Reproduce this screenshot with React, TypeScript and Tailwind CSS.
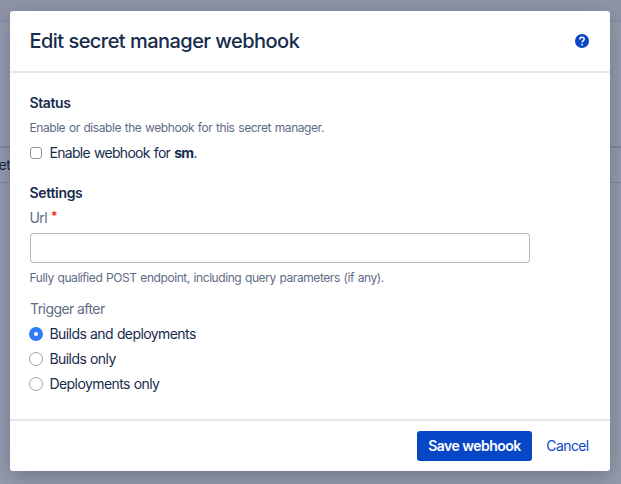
import React from "react";

function HelpIcon() {
  return (
    <svg width="14" height="14" viewBox="0 0 14 14" aria-label="Help" role="img">
      <circle cx="7" cy="7" r="7" fill="#0747c6" />
      <path d="M4.8 5.5C4.8 4.1 5.7 3.2 7 3.2s2.2.8 2.2 2c0 1.5-2.1 1.5-2.1 3.3" fill="none" stroke="#fff" strokeWidth="1.5" />
      <circle cx="7.1" cy="10.6" r="0.95" fill="#fff" />
    </svg>
  );
}

function Radio({ label, checked = false }: { label: string; checked?: boolean }) {
  return (
    <label className="-ml-px flex h-[25px] items-center">
      {checked ? (
        <span className="mr-[6.5px] flex size-[14px] items-center justify-center rounded-full bg-[#2f7bf6]">
          <span className="size-1 rounded-full bg-white" />
        </span>
      ) : (
        <span className="mr-[6.5px] size-[14px] rounded-full border border-[#a3a3a3] bg-white" />
      )}
      <span className="tracking-[-0.58px] [word-spacing:0.5px]">{label}</span>
    </label>
  );
}

function Backdrop() {
  return (
    <div className="h-full bg-[#959bab]">
      <div className="h-[22px] border-b border-[#858b9c] bg-[#8f95a6]" />
      <div className="h-[124px]" />
      <div className="flex h-[37px] items-center border-t-2 border-b border-t-[#81879a] border-b-[#81879a] text-sm text-[#172643]">
        <span className="-ml-[1.5px] tracking-[-0.5px]">et</span>
      </div>
    </div>
  );
}

export default function App() {
  return (
    <main className="relative h-[484px] w-[621px] overflow-hidden font-['Inter',sans-serif] text-sm text-[#172b4d]">
      <Backdrop />
      <section
        role="dialog"
        className="absolute top-[11px] left-[10px] flex h-[460px] w-[600px] flex-col rounded-[3px] bg-white shadow-[0_6px_20px_rgba(9,30,66,0.28)]"
      >
        <header className="flex h-[62px] items-center justify-between border-b-2 border-[#e7e8ef] pr-[21.5px] pl-[19.5px]">
          <h2 className="text-xl font-medium tracking-[-0.54px]">Edit secret manager webhook</h2>
          <HelpIcon />
        </header>
        <div className="flex-1 px-5 pt-[18px]">
          <h3 className="-ml-[0.5px] h-[25px] leading-6 font-semibold tracking-[-0.4px]">Status</h3>
          <p className="-ml-[0.5px] h-6 text-xs leading-6 tracking-[-0.44px] text-[#5e6c84] [word-spacing:0.8px]">
            Enable or disable the webhook for this secret manager.
          </p>
          <label className="flex h-[26px] items-center">
            <span className="mr-[7.5px] size-3 rounded-[3px] border border-[#929292]" />
            <span className="tracking-[-0.7px] [word-spacing:0.8px]">
              Enable webhook for <b>sm</b>.
            </span>
          </label>
          <h3 className="-ml-[0.5px] mt-[15px] h-6 leading-6 font-semibold tracking-[-0.32px]">Settings</h3>
          <div className="-ml-[0.5px] flex h-[28px] pt-[1px] leading-6 text-[#5e6c84]">
            <span className="tracking-[-0.6px]">Url</span>
            <span className="ml-[4px] text-xs leading-[20px] font-semibold text-[#ee2c10]">*</span>
          </div>
          <div className="h-[30px] w-[500px] rounded-[3px] border border-[#b3b8c6]" />
          <p className="-ml-[0.5px] h-[30px] text-xs leading-[30px] tracking-[-0.43px] text-[#5e6c84] [word-spacing:0.8px]">
            Fully qualified POST endpoint, including query parameters (if any).
          </p>
          <div className="mt-1 h-6 leading-6 tracking-[-0.58px] text-[#5e6c84]">Trigger after</div>
          <Radio label="Builds and deployments" checked />
          <Radio label="Builds only" />
          <Radio label="Deployments only" />
        </div>
        <footer className="flex h-[52px] items-center justify-end border-t-2 border-[#e7e8ef] pr-[21px]">
          <button className="h-[30px] w-[115px] rounded-[3px] bg-[#0747c6] font-semibold tracking-[-0.52px] text-white">
            Save webhook
          </button>
          <button className="ml-[14px] w-[43px] tracking-[-0.6px] text-[#0747c6]">Cancel</button>
        </footer>
      </section>
    </main>
  );
}
